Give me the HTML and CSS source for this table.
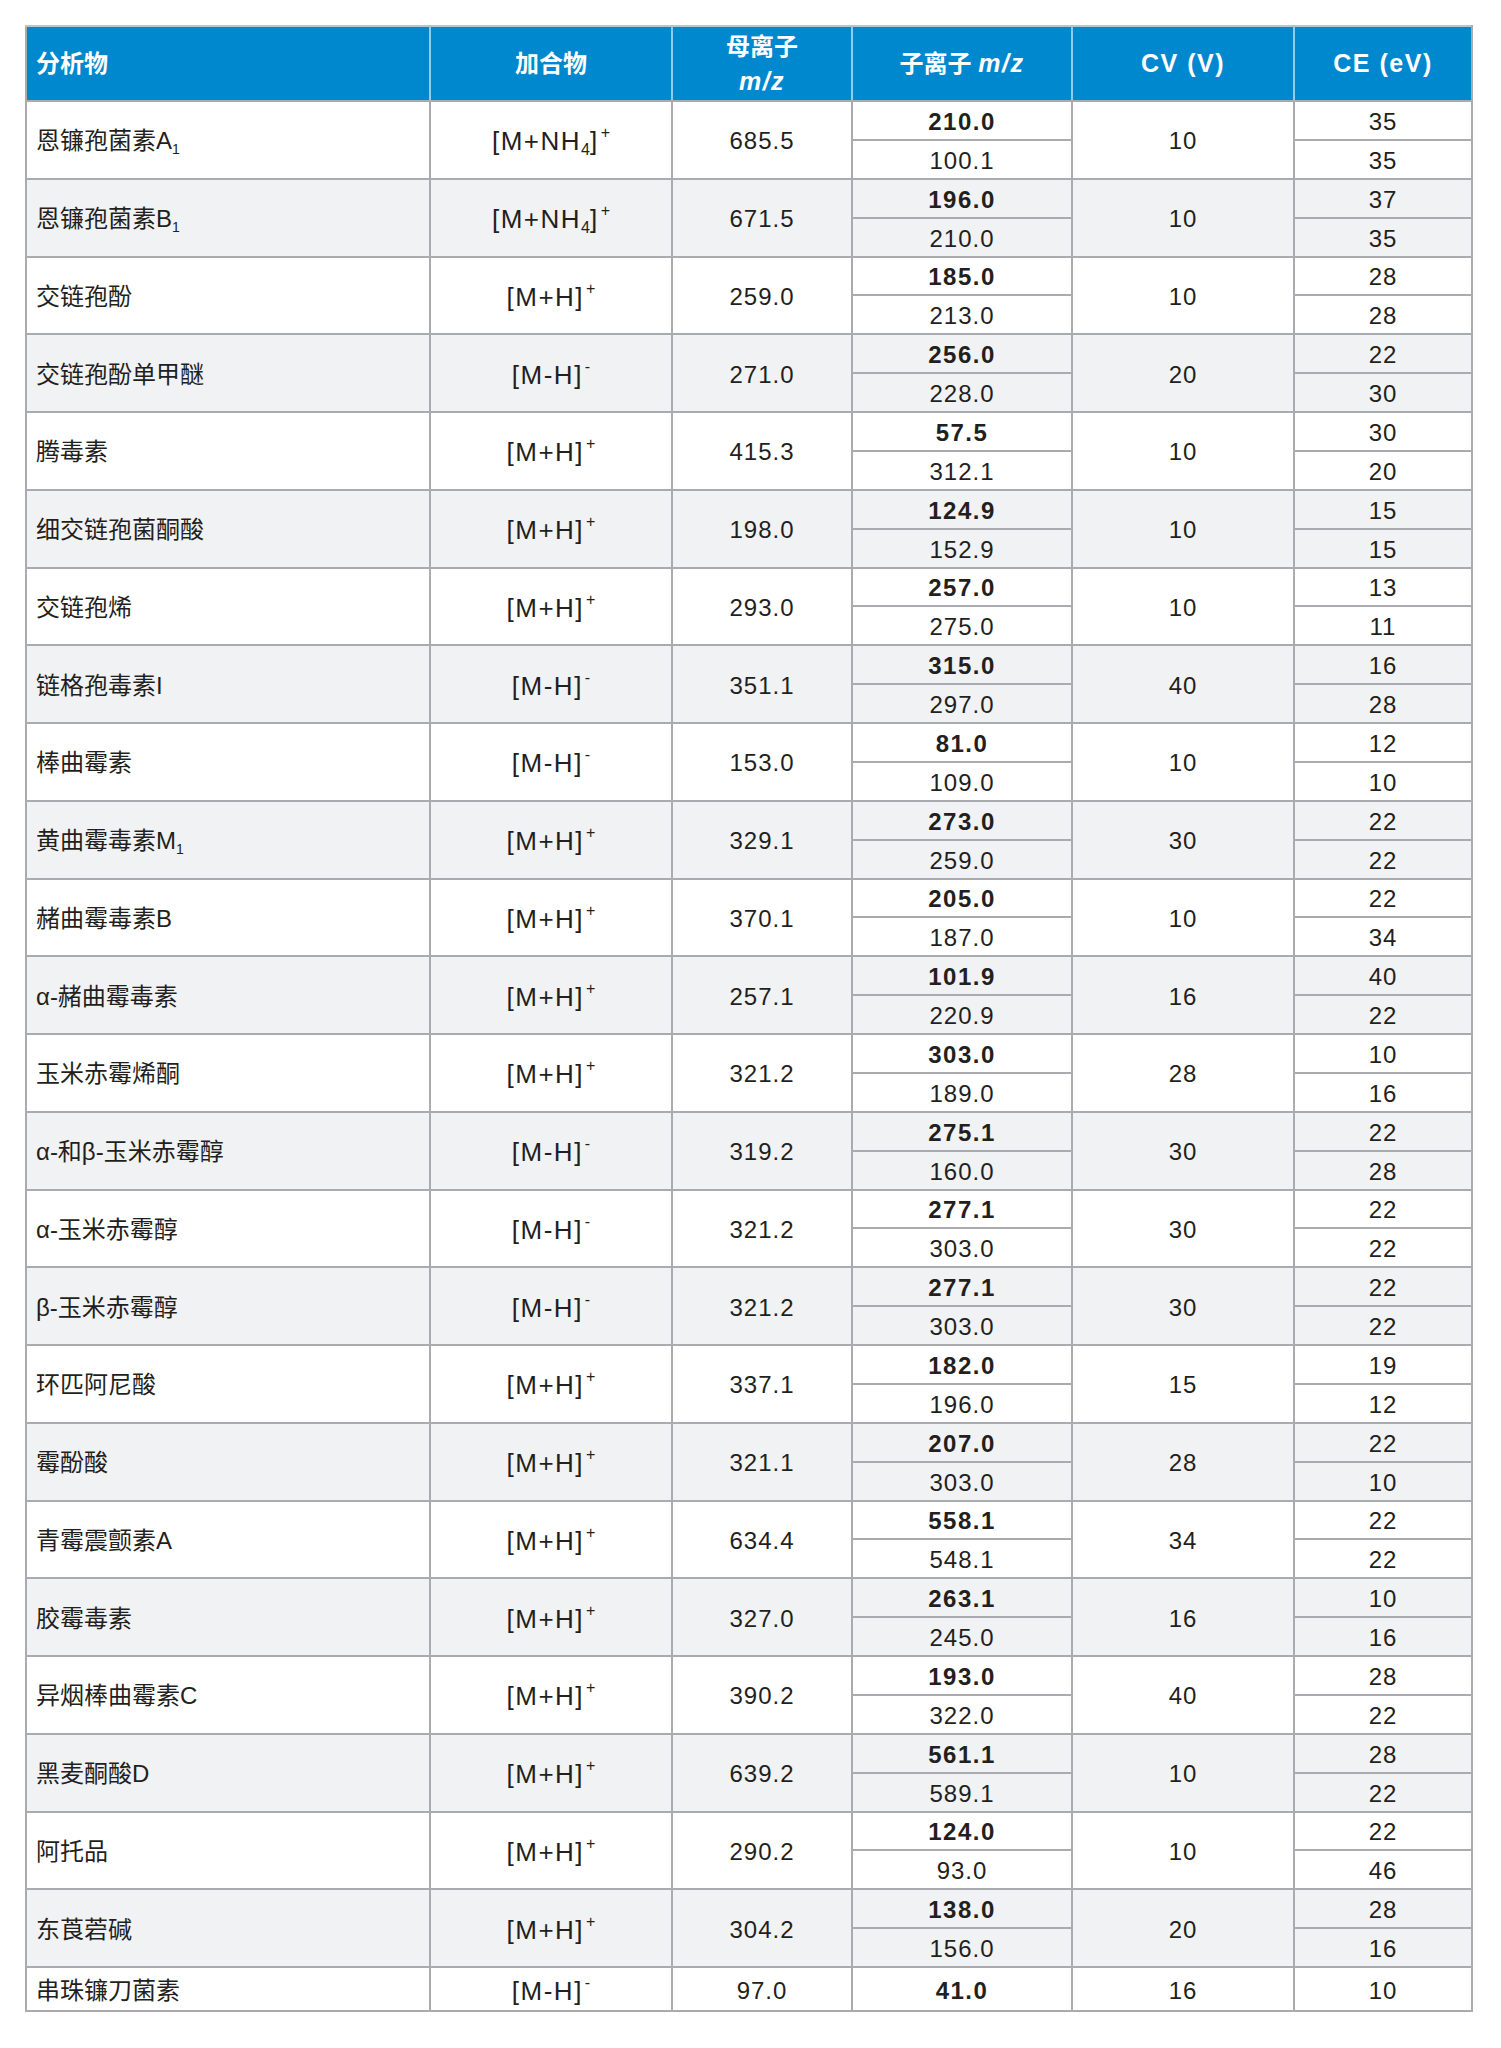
FILE: index.html
```html
<!DOCTYPE html>
<html lang="zh">
<head>
<meta charset="utf-8">
<title>质谱参数表</title>
<link rel="stylesheet" href="styles.css">
</head>
<body>
<table class="mrm">
  <colgroup>
    <col class="c-name"><col class="c-add"><col class="c-pre"><col class="c-pro"><col class="c-cv"><col class="c-ce">
  </colgroup>
  <thead>
    <tr class="head">
      <th class="left">分析物</th>
      <th>加合物</th>
      <th class="two">母离子<br><i class="lat">m/z</i></th>
      <th>子离子 <i class="lat">m/z</i></th>
      <th><span class="lat">CV (V)</span></th>
      <th><span class="lat">CE (eV)</span></th>
    </tr>
  </thead>
  <tbody>
    <tr class="sub"><td rowspan="2" class="left">恩镰孢菌素A<sub>1</sub></td><td rowspan="2" class="ad">[M+NH<sub>4</sub>]<sup>+</sup></td><td rowspan="2">685.5</td><td class="b">210.0</td><td rowspan="2">10</td><td>35</td></tr>
    <tr class="sub"><td>100.1</td><td>35</td></tr>

    <tr class="sub alt"><td rowspan="2" class="left">恩镰孢菌素B<sub>1</sub></td><td rowspan="2" class="ad">[M+NH<sub>4</sub>]<sup>+</sup></td><td rowspan="2">671.5</td><td class="b">196.0</td><td rowspan="2">10</td><td>37</td></tr>
    <tr class="sub alt"><td>210.0</td><td>35</td></tr>

    <tr class="sub"><td rowspan="2" class="left">交链孢酚</td><td rowspan="2" class="ad">[M+H]<sup>+</sup></td><td rowspan="2">259.0</td><td class="b">185.0</td><td rowspan="2">10</td><td>28</td></tr>
    <tr class="sub"><td>213.0</td><td>28</td></tr>

    <tr class="sub alt"><td rowspan="2" class="left">交链孢酚单甲醚</td><td rowspan="2" class="ad">[M-H]<sup>-</sup></td><td rowspan="2">271.0</td><td class="b">256.0</td><td rowspan="2">20</td><td>22</td></tr>
    <tr class="sub alt"><td>228.0</td><td>30</td></tr>

    <tr class="sub"><td rowspan="2" class="left">腾毒素</td><td rowspan="2" class="ad">[M+H]<sup>+</sup></td><td rowspan="2">415.3</td><td class="b">57.5</td><td rowspan="2">10</td><td>30</td></tr>
    <tr class="sub"><td>312.1</td><td>20</td></tr>

    <tr class="sub alt"><td rowspan="2" class="left">细交链孢菌酮酸</td><td rowspan="2" class="ad">[M+H]<sup>+</sup></td><td rowspan="2">198.0</td><td class="b">124.9</td><td rowspan="2">10</td><td>15</td></tr>
    <tr class="sub alt"><td>152.9</td><td>15</td></tr>

    <tr class="sub"><td rowspan="2" class="left">交链孢烯</td><td rowspan="2" class="ad">[M+H]<sup>+</sup></td><td rowspan="2">293.0</td><td class="b">257.0</td><td rowspan="2">10</td><td>13</td></tr>
    <tr class="sub"><td>275.0</td><td>11</td></tr>

    <tr class="sub alt"><td rowspan="2" class="left">链格孢毒素I</td><td rowspan="2" class="ad">[M-H]<sup>-</sup></td><td rowspan="2">351.1</td><td class="b">315.0</td><td rowspan="2">40</td><td>16</td></tr>
    <tr class="sub alt"><td>297.0</td><td>28</td></tr>

    <tr class="sub"><td rowspan="2" class="left">棒曲霉素</td><td rowspan="2" class="ad">[M-H]<sup>-</sup></td><td rowspan="2">153.0</td><td class="b">81.0</td><td rowspan="2">10</td><td>12</td></tr>
    <tr class="sub"><td>109.0</td><td>10</td></tr>

    <tr class="sub alt"><td rowspan="2" class="left">黄曲霉毒素M<sub>1</sub></td><td rowspan="2" class="ad">[M+H]<sup>+</sup></td><td rowspan="2">329.1</td><td class="b">273.0</td><td rowspan="2">30</td><td>22</td></tr>
    <tr class="sub alt"><td>259.0</td><td>22</td></tr>

    <tr class="sub"><td rowspan="2" class="left">赭曲霉毒素B</td><td rowspan="2" class="ad">[M+H]<sup>+</sup></td><td rowspan="2">370.1</td><td class="b">205.0</td><td rowspan="2">10</td><td>22</td></tr>
    <tr class="sub"><td>187.0</td><td>34</td></tr>

    <tr class="sub alt"><td rowspan="2" class="left">α-赭曲霉毒素</td><td rowspan="2" class="ad">[M+H]<sup>+</sup></td><td rowspan="2">257.1</td><td class="b">101.9</td><td rowspan="2">16</td><td>40</td></tr>
    <tr class="sub alt"><td>220.9</td><td>22</td></tr>

    <tr class="sub"><td rowspan="2" class="left">玉米赤霉烯酮</td><td rowspan="2" class="ad">[M+H]<sup>+</sup></td><td rowspan="2">321.2</td><td class="b">303.0</td><td rowspan="2">28</td><td>10</td></tr>
    <tr class="sub"><td>189.0</td><td>16</td></tr>

    <tr class="sub alt"><td rowspan="2" class="left">α-和β-玉米赤霉醇</td><td rowspan="2" class="ad">[M-H]<sup>-</sup></td><td rowspan="2">319.2</td><td class="b">275.1</td><td rowspan="2">30</td><td>22</td></tr>
    <tr class="sub alt"><td>160.0</td><td>28</td></tr>

    <tr class="sub"><td rowspan="2" class="left">α-玉米赤霉醇</td><td rowspan="2" class="ad">[M-H]<sup>-</sup></td><td rowspan="2">321.2</td><td class="b">277.1</td><td rowspan="2">30</td><td>22</td></tr>
    <tr class="sub"><td>303.0</td><td>22</td></tr>

    <tr class="sub alt"><td rowspan="2" class="left">β-玉米赤霉醇</td><td rowspan="2" class="ad">[M-H]<sup>-</sup></td><td rowspan="2">321.2</td><td class="b">277.1</td><td rowspan="2">30</td><td>22</td></tr>
    <tr class="sub alt"><td>303.0</td><td>22</td></tr>

    <tr class="sub"><td rowspan="2" class="left">环匹阿尼酸</td><td rowspan="2" class="ad">[M+H]<sup>+</sup></td><td rowspan="2">337.1</td><td class="b">182.0</td><td rowspan="2">15</td><td>19</td></tr>
    <tr class="sub"><td>196.0</td><td>12</td></tr>

    <tr class="sub alt"><td rowspan="2" class="left">霉酚酸</td><td rowspan="2" class="ad">[M+H]<sup>+</sup></td><td rowspan="2">321.1</td><td class="b">207.0</td><td rowspan="2">28</td><td>22</td></tr>
    <tr class="sub alt"><td>303.0</td><td>10</td></tr>

    <tr class="sub"><td rowspan="2" class="left">青霉震颤素A</td><td rowspan="2" class="ad">[M+H]<sup>+</sup></td><td rowspan="2">634.4</td><td class="b">558.1</td><td rowspan="2">34</td><td>22</td></tr>
    <tr class="sub"><td>548.1</td><td>22</td></tr>

    <tr class="sub alt"><td rowspan="2" class="left">胶霉毒素</td><td rowspan="2" class="ad">[M+H]<sup>+</sup></td><td rowspan="2">327.0</td><td class="b">263.1</td><td rowspan="2">16</td><td>10</td></tr>
    <tr class="sub alt"><td>245.0</td><td>16</td></tr>

    <tr class="sub"><td rowspan="2" class="left">异烟棒曲霉素C</td><td rowspan="2" class="ad">[M+H]<sup>+</sup></td><td rowspan="2">390.2</td><td class="b">193.0</td><td rowspan="2">40</td><td>28</td></tr>
    <tr class="sub"><td>322.0</td><td>22</td></tr>

    <tr class="sub alt"><td rowspan="2" class="left">黑麦酮酸D</td><td rowspan="2" class="ad">[M+H]<sup>+</sup></td><td rowspan="2">639.2</td><td class="b">561.1</td><td rowspan="2">10</td><td>28</td></tr>
    <tr class="sub alt"><td>589.1</td><td>22</td></tr>

    <tr class="sub"><td rowspan="2" class="left">阿托品</td><td rowspan="2" class="ad">[M+H]<sup>+</sup></td><td rowspan="2">290.2</td><td class="b">124.0</td><td rowspan="2">10</td><td>22</td></tr>
    <tr class="sub"><td>93.0</td><td>46</td></tr>

    <tr class="sub alt"><td rowspan="2" class="left">东莨菪碱</td><td rowspan="2" class="ad">[M+H]<sup>+</sup></td><td rowspan="2">304.2</td><td class="b">138.0</td><td rowspan="2">20</td><td>28</td></tr>
    <tr class="sub alt"><td>156.0</td><td>16</td></tr>

    <tr class="single"><td class="left">串珠镰刀菌素</td><td class="ad">[M-H]<sup>-</sup></td><td>97.0</td><td class="b">41.0</td><td>16</td><td>10</td></tr>
  </tbody>
</table>
</body>
</html>
```

FILE: styles.css
```css
html, body {
  margin: 0;
  padding: 0;
  background: #ffffff;
}

body {
  font-family: "Liberation Sans", "Noto Sans CJK SC", sans-serif;
  color: #231f20;
}

.mrm {
  border-collapse: collapse;
  table-layout: fixed;
  width: 1448px;
  margin: 25px 0 0 25px;
  font-size: 24px;
  line-height: 1;
}

.c-name { width: 404px; }
.c-add { width: 242px; }
.c-pre { width: 180px; }
.c-pro { width: 220px; }
.c-cv { width: 222px; }
.c-ce { width: 178px; }

.mrm th,
.mrm td {
  padding: 0;
  text-align: center;
  vertical-align: middle;
  border: 2px solid #a9abae;
  white-space: nowrap;
}

.mrm td {
  padding-top: 3px;
  letter-spacing: 1px;
}

.mrm td.left {
  letter-spacing: 0;
}

.mrm .left {
  text-align: left;
  padding-left: 9px;
}

.mrm td.ad {
  font-size: 26px;
  letter-spacing: 1.5px;
}

.head {
  height: 75px;
  background: #0088ce;
}

.mrm th {
  color: #ffffff;
  font-weight: 700;
  font-size: 24px;
  border-top-color: #b4c7d3;
  border-left-color: #8fcdee;
  border-right-color: #8fcdee;
  border-bottom-color: #a9abae;
}

.mrm th .lat {
  font-size: 25px;
  letter-spacing: 1.5px;
}

.mrm th:first-child { border-left-color: #a9abae; }
.mrm th:last-child { border-right-color: #a9abae; }

.mrm th.two {
  line-height: 34px;
  padding-top: 1px;
}

.mrm i {
  font-style: italic;
}

.sub {
  height: 38.875px;
}

.single {
  height: 44px;
}

.alt {
  background: #f1f2f4;
}

.mrm td.b {
  font-weight: 700;
  letter-spacing: 1.5px;
}

.mrm sub,
.mrm sup {
  font-size: 14px;
  line-height: 0;
  letter-spacing: 0;
  position: relative;
  vertical-align: baseline;
}

.mrm td.ad sub,
.mrm td.ad sup {
  font-size: 16px;
}

.mrm sub { top: 5px; }
.mrm sup { top: -12px; margin-left: 2px; }
```
